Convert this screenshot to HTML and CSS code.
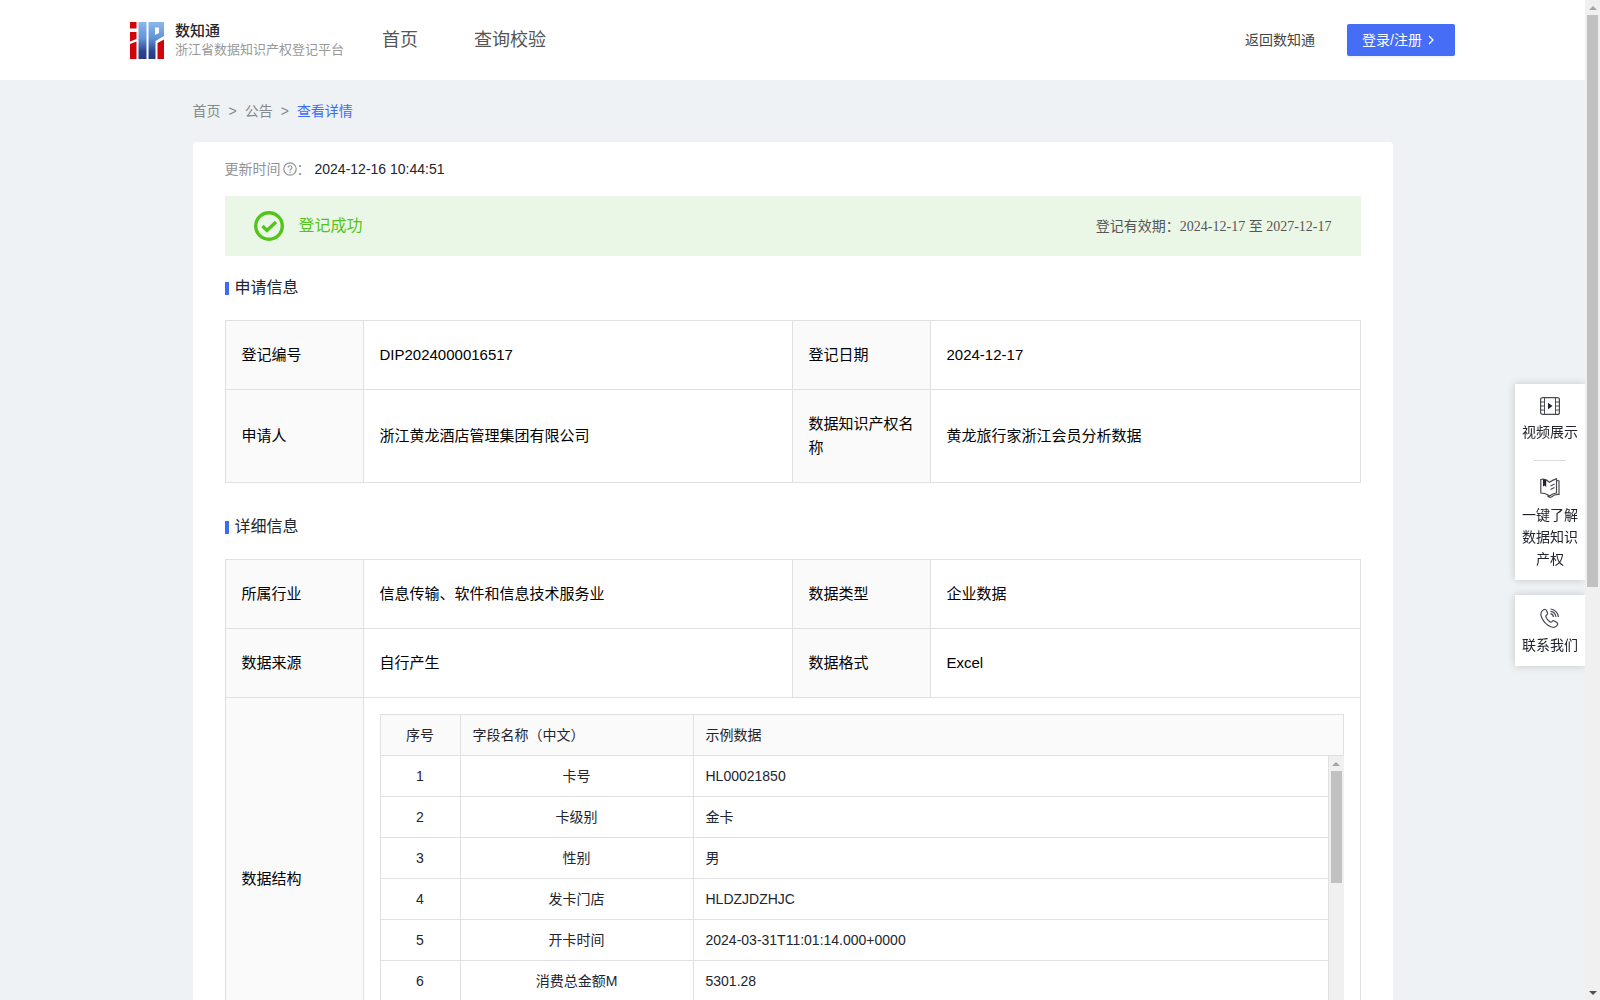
FILE: index.html
```html
<!DOCTYPE html>
<html lang="zh-CN">
<head>
<meta charset="utf-8">
<title>数知通 - 查看详情</title>
<link rel="stylesheet" href="styles.css">
</head>
<body>
<div class="page">
<header class="header">
  <div class="header-inner">
    <a class="brand" href="#">
      <svg class="logo" width="34" height="37" viewBox="0 0 34 37" aria-hidden="true">
        <defs><linearGradient id="blue" gradientUnits="userSpaceOnUse" x1="0" y1="0" x2="0" y2="37"><stop offset="0" stop-color="#8cb8ea"/><stop offset=".45" stop-color="#5f93d6"/><stop offset=".8" stop-color="#2c458f"/><stop offset="1" stop-color="#263a84"/></linearGradient></defs>
        <path fill="#d0040b" d="M0 0h6.500v6.500H0zM0 10h6.500v7L0 19.500zM0 22l6.500-2.500V37H0zM27.500 21l6.500-3.500V37h-6.500z"/>
        <path fill="url(#blue)" fill-rule="evenodd" d="M8.500 0h8v37h-8zM18.500 0H34v14l-8.500 5V37h-7zM25 5.500V13l4-2V5.500z"/>
      </svg>
      <span class="brand-text"><strong class="brand-name">数知通</strong><span class="brand-sub">浙江省数据知识产权登记平台</span></span>
    </a>
    <nav class="nav"><a href="#">首页</a><a href="#">查询校验</a></nav>
    <div class="header-actions">
      <a class="back" href="#">返回数知通</a>
      <button class="login" type="button">登录/注册<svg width="10" height="10" viewBox="0 0 10 10" aria-hidden="true"><path d="M3 1l4 4-4 4" fill="none" stroke="currentColor" stroke-width="1.300"/></svg></button>
    </div>
  </div>
</header>
<main class="main">
  <nav class="crumbs"><a href="#">首页</a><span>&gt;</span><a href="#">公告</a><span>&gt;</span><a class="current" href="#">查看详情</a></nav>
  <section class="card">
    <p class="updated"><span class="updated-label">更新时间<svg width="14" height="14" viewBox="0 0 14 14" aria-hidden="true"><g fill="none" stroke="currentColor"><circle cx="7" cy="7" r="6.200" stroke-width="1.200"/><path d="M5.100 5.600c0-2.500 3.900-2.400 3.900 0 0 1.300-2 1.400-2 2.900" stroke-width="1.200"/></g><circle cx="7" cy="10.300" r=".8" fill="currentColor"/></svg>：</span><time>2024-12-16 10:44:51</time></p>
    <div class="banner">
      <svg width="30" height="30" viewBox="0 0 30 30" aria-hidden="true"><circle cx="15" cy="15" r="13.300" fill="none" stroke="#52c41a" stroke-width="3.400"/><path d="M8.500 15l4.500 4.500 9-8.500" fill="none" stroke="#52c41a" stroke-width="3.400"/></svg>
      <span class="banner-status">登记成功</span>
      <span class="banner-term">登记有效期：<span class="term-dates">2024-12-17 至 2027-12-17</span></span>
    </div>
    <h2 class="title">申请信息</h2>
    <table class="info">
      <colgroup><col class="col-label"><col class="col-first"><col class="col-label"><col></colgroup>
      <tr><th scope="row">登记编号</th><td>DIP2024000016517</td><th scope="row">登记日期</th><td>2024-12-17</td></tr>
      <tr><th scope="row">申请人</th><td>浙江黄龙酒店管理集团有限公司</td><th scope="row">数据知识产权名称</th><td>黄龙旅行家浙江会员分析数据</td></tr>
    </table>
    <h2 class="title">详细信息</h2>
    <table class="info">
      <colgroup><col class="col-label"><col class="col-first"><col class="col-label"><col></colgroup>
      <tr><th scope="row">所属行业</th><td>信息传输、软件和信息技术服务业</td><th scope="row">数据类型</th><td>企业数据</td></tr>
      <tr><th scope="row">数据来源</th><td>自行产生</td><th scope="row">数据格式</th><td>Excel</td></tr>
      <tr><th scope="row">数据结构</th><td class="nested" colspan="3">
        <table class="field-table field-head">
          <colgroup><col class="col-no"><col class="col-name"><col></colgroup>
          <tr><th scope="col">序号</th><th scope="col">字段名称（中文）</th><th scope="col">示例数据</th></tr>
        </table>
        <div class="field-scroll">
          <div class="field-view">
            <table class="field-table field-body">
              <colgroup><col class="col-no"><col class="col-name"><col></colgroup>
              <tr><td>1</td><td>卡号</td><td>HL00021850</td></tr>
              <tr><td>2</td><td>卡级别</td><td>金卡</td></tr>
              <tr><td>3</td><td>性别</td><td>男</td></tr>
              <tr><td>4</td><td>发卡门店</td><td>HLDZJDZHJC</td></tr>
              <tr><td>5</td><td>开卡时间</td><td>2024-03-31T11:01:14.000+0000</td></tr>
              <tr><td>6</td><td>消费总金额M</td><td>5301.28</td></tr>
            </table>
          </div>
          <div class="scrollbar" aria-hidden="true"><span class="arrow arrow-up"></span><span class="track"><span class="thumb thumb-fields"></span></span><span class="arrow arrow-down"></span></div>
        </div>
      </td></tr>
    </table>
  </section>
</main>
</div>
<div class="scrollbar" aria-hidden="true"><span class="arrow arrow-up"></span><span class="track"><span class="thumb thumb-page"></span></span><span class="arrow arrow-down"></span></div>
<aside class="side">
  <div class="side-box">
    <a href="#"><svg width="20" height="18" viewBox="0 0 20 18" aria-hidden="true"><g fill="none" stroke="#4a4a52"><rect x=".6" y=".6" width="18.800" height="16.800" rx="2" stroke-width="1.200"/><path d="M4.500.5v17M15.500.5v17M.5 5h4M.5 9h4M.5 13h4M15.500 5h4M15.500 9h4M15.500 13h4"/></g><path d="M8 5.800v6.400L12.500 9z" fill="#22252e"/></svg>视频展示</a>
    <hr>
    <a href="#"><svg width="20" height="20" viewBox="0 0 20 20" aria-hidden="true"><g fill="none" stroke="#4a4a52" stroke-width="1.200"><path d="M.8 1.500c3-.8 6 .2 8.700 2.700C12 2.500 14 1.500 16.500.8V15c-2.500.4-5 1.400-7 3-2.500-2-5.500-3-8.700-3zM17 2.500l2 .5v13.500c-3-.2-5.500.5-7.500 2.500-1.500.7-2.500.3-4-1M10.500 8l4-2M10.500 11.500l4-2"/></g><path d="M3 1.200l3.200.8v7L4.600 7.500 3 8.500z" fill="#22252e"/></svg>一键了解数据知识产权</a>
  </div>
  <div class="side-box">
    <a href="#"><svg width="20" height="20" viewBox="0 0 20 20" aria-hidden="true"><path d="M3.500 1.800C1 3.200.3 6 1.500 9c1.700 4.300 5 8 9.300 9.700 2.800 1.100 5.400.6 6.600-1.800.5-1 .2-1.700-.6-2.300l-2.300-1.600c-.9-.6-1.700-.4-2.300.4-.7 1-1.500 1-2.500.3-1.700-1.200-3-2.800-3.700-4.600-.4-1-.2-1.600.7-2.200.8-.5 1-1.200.7-2.100L6.500 2.500c-.5-1.100-1.600-1.400-3-.7zM10.500 1c4 .3 7.400 3.500 8 8M10.500 3.300c3 .3 5 2.500 5.500 5.700M10.500 5.700c1.700.3 2.800 1.400 3 3.300" fill="none" stroke="#4a4a52" stroke-width="1.200"/></svg>联系我们</a>
  </div>
</aside>
</body>
</html>
```
FILE: styles.css
```css
* { box-sizing: border-box; }
body { display: flex; height: 100vh; margin: 0; background: #eef2f5; color: #22252e; font: 14px/22px "Liberation Sans", "Noto Sans CJK SC", sans-serif; }
a { color: inherit; text-decoration: none; }
.page { flex: 1; min-width: 0; overflow-y: auto; scrollbar-width: none; }
.header { background: #fff; height: 80px; }
.header-inner { display: flex; align-items: center; height: 100%; padding: 0 130px; }
.brand { display: flex; align-items: center; gap: 11px; }
.logo { flex: none; }
.brand-text { display: flex; flex-direction: column; }
.brand-name { font-size: 15px; line-height: 20px; font-weight: 500; }
.brand-sub { font-size: 13px; line-height: 18px; color: #999; width: 163px; white-space: nowrap; }
.nav { display: flex; gap: 56px; margin-left: 44px; font-size: 18px; color: #555; }
.header-actions { display: flex; align-items: center; gap: 32px; margin-left: auto; }
.back { color: #444; }
.login { display: flex; align-items: center; gap: 4px; width: 108px; height: 32px; padding: 0 15px; border: 0; border-radius: 2px; background: #456df6; color: #fff; font: inherit; box-shadow: 0 2px 0 rgba(0, 0, 0, .04); white-space: nowrap; }
.main { max-width: 1200px; margin: 0 auto; }
.crumbs { display: flex; gap: 8px; padding: 20px 0; color: #86888c; }
.crumbs .current { color: #3d6bf5; }
.card { background: #fff; border-radius: 4px; padding: 16px 32px 32px; }
.updated { display: flex; align-items: center; margin: 0 0 16px; }
.updated-label { display: flex; align-items: center; color: #909399; }
.updated-label svg { margin-left: 2px; }
.updated time { margin-left: 4px; }
.banner { display: flex; align-items: center; height: 60px; padding: 0 29px; background: #ebf7e6; }
.banner-status { margin-left: 15px; font-size: 16px; color: #52c41a; }
.banner-term { margin-left: auto; color: #555; }
.term-dates { font-family: "Liberation Serif", "Noto Sans CJK SC", serif; }
.title { display: flex; align-items: center; gap: 6px; margin: 20px 0; font-size: 16px; line-height: 24px; font-weight: 400; }
.title::before { content: ""; width: 4px; height: 13px; background: #3d6bf5; }
.info { width: 100%; table-layout: fixed; border-collapse: collapse; font-size: 15px; line-height: 24px; color: #000; }
.info + .title { margin-top: 32px; }
.info th, .info td { padding: 22px 16px; border: 1px solid #e0e0e0; font-weight: 400; text-align: left; }
.info th { background: #fafafa; }
.col-label { width: 138px; }
.col-first { width: 429px; }
.info .nested { padding: 16px; }
.field-table { width: 100%; table-layout: fixed; border-collapse: collapse; font-size: 14px; line-height: 22px; color: #22252e; }
.info .field-table th, .info .field-table td { padding: 9px 12px; height: 41px; }
.info .field-table th:first-child, .info .field-body td:first-child, .info .field-body td:nth-child(2) { text-align: center; }
.col-no { width: 80px; }
.col-name { width: 233px; }
.field-scroll { display: flex; height: 288px; }
.field-view { flex: 1; min-width: 0; overflow-y: auto; scrollbar-width: none; }
.info .field-body tr:first-child td { height: 40px; padding: 9px 12px 8px; border-top: 0; }

.scrollbar { flex: none; display: flex; flex-direction: column; align-items: center; width: 15px; background: #f0f0f0; }
.arrow { flex: none; display: flex; align-items: center; justify-content: center; width: 15px; height: 15px; }
.arrow::before { content: ""; border: 4px solid transparent; border-top-width: 0; border-bottom-width: 0; }
.arrow-up::before { border-bottom: 4px solid #a3a3a3; }
.arrow-down::before { border-top: 4px solid #505050; }
.track { flex: 1; width: 11px; }
.thumb { display: block; background: #c1c1c1; }
.thumb-page { height: 59%; }
.thumb-fields { height: 112px; }

.side { position: fixed; right: 15px; top: 384px; width: 70px; display: flex; flex-direction: column; gap: 15px; text-align: center; clip-path: inset(-10px 0 -10px -10px); }
.side-box { background: #fff; padding: 13px 7px 10px; box-shadow: 0 0 8px rgba(0, 0, 0, .18); }
.side-box a { display: flex; flex-direction: column; align-items: center; gap: 6px; }
.side-box hr { width: 32px; margin: 17px auto; border: 0; border-top: 1px solid #dcdcdc; }
```
